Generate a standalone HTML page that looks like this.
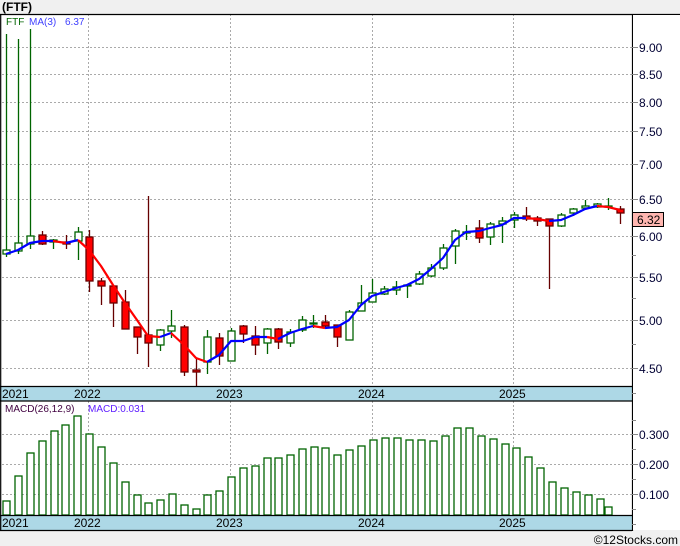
<!DOCTYPE html>
<html><head><meta charset="utf-8"><style>
html,body{margin:0;padding:0;background:#f0f0f0;}
svg{display:block;font-family:"Liberation Sans",sans-serif;}
</style></head><body>
<svg width="680" height="546" viewBox="0 0 680 546" xmlns="http://www.w3.org/2000/svg">
<rect x="0" y="0" width="680" height="546" fill="#f0f0f0"/>
<text x="2" y="11" font-size="12" font-weight="bold" fill="#000">(FTF)</text>
<!-- main panel -->
<rect x="0" y="14" width="632" height="372" fill="#fff"/>
<rect x="0" y="401" width="632" height="114" fill="#fff"/>
<g stroke="#aaa" stroke-width="1" stroke-dasharray="2,2" fill="none">
<path d="M2 47.5H632M2 74.5H632M2 102.5H632M2 131.5H632M2 164.5H632M2 199.5H632M2 236.5H632M2 277.5H632M2 320.5H632M2 368.5H632"/>
<path d="M88.5 14V386M230.5 14V386M372.5 14V386M513.5 14V386"/>
<path d="M2 434.5H632M2 464.5H632M2 494.5H632"/>
<path d="M88.5 401V515M230.5 401V515M372.5 401V515M513.5 401V515"/>
</g>
<text x="6" y="25" font-size="10" fill="#006400">FTF</text>
<text x="29" y="25" font-size="10" fill="#4040ff">MA(3)</text>
<text x="65" y="25" font-size="10" fill="#4040ff">6.37</text>
<!-- candles -->
<g stroke-width="1.3">
<g stroke="#006400" fill="#fff">
<path d="M6.5 34V257M18.5 39V254M30.5 29V249M53.5 239V249M78.5 227V260M160.5 329V351M171.5 310V338M207.5 330V374M231.5 328V361M267.5 328V354M290.5 329V347M302.5 316V332M313.5 315V328M349.5 310V340M361.5 285V311M372.5 279V302M384.5 286V295M396.5 281V295M407.5 285V298M419.5 271V285M431.5 264V277M443.5 244V270M455.5 229V264M466.5 225V240M490.5 222V245M502.5 217V243M514.5 212V228M561.5 213V227M573.5 208V216M585.5 200V210M597.5 203V208M608.5 198V210"/>
<rect x="3" y="250" width="7" height="4"/><rect x="15" y="243" width="7" height="8"/><rect x="27" y="236" width="7" height="8"/>
<rect x="50" y="240" width="7" height="2"/><rect x="75" y="232" width="7" height="9"/>
<rect x="157" y="330" width="7" height="15"/><rect x="168" y="326" width="7" height="5"/>
<rect x="204" y="337" width="7" height="25"/><rect x="228" y="331" width="7" height="30"/>
<rect x="264" y="329" width="7" height="14"/><rect x="287" y="332" width="7" height="11"/>
<rect x="299" y="320" width="7" height="10"/><rect x="310" y="323" width="7" height="1"/>
<rect x="346" y="312" width="7" height="28"/><rect x="358" y="303" width="7" height="8"/>
<rect x="369" y="293" width="7" height="9"/><rect x="381" y="289" width="7" height="5"/>
<rect x="393" y="287" width="7" height="3"/><rect x="404" y="285" width="7" height="1"/>
<rect x="416" y="274" width="7" height="10"/><rect x="428" y="268" width="7" height="8"/>
<rect x="440" y="248" width="7" height="20"/><rect x="452" y="231" width="7" height="15"/>
<rect x="463" y="232" width="7" height="1"/><rect x="487" y="224" width="7" height="13"/>
<rect x="499" y="221" width="7" height="3"/><rect x="511" y="215" width="7" height="5"/>
<rect x="558" y="215" width="7" height="11"/><rect x="570" y="209" width="7" height="4"/>
<rect x="582" y="206" width="7" height="2"/><rect x="594" y="204" width="7" height="3"/>
<rect x="605" y="206" width="7" height="1"/>
</g>
<g stroke="#600" fill="#f00">
<path d="M42.5 231V245M66.5 235V249M89.5 230V292M101.5 278V305M113.5 286V327M125.5 290V329M137.5 327V354M148.5 196V367M184.5 325V376M196.5 358V387M219.5 333V365M243.5 325V343M255.5 326V355M278.5 328V349M325.5 315V327M337.5 325V347M479.5 220V243M526.5 207V221M537.5 216V226M549.5 219V289M620.5 206V224"/>
<rect x="39" y="235" width="7" height="9"/><rect x="63" y="242" width="7" height="2"/>
<rect x="86" y="237" width="7" height="44"/><rect x="98" y="281" width="7" height="5"/>
<rect x="110" y="286" width="7" height="17"/><rect x="122" y="302" width="7" height="27"/>
<rect x="134" y="327" width="7" height="10"/><rect x="145" y="335" width="7" height="8"/>
<rect x="181" y="327" width="7" height="45"/><rect x="193" y="370" width="7" height="2"/>
<rect x="216" y="338" width="7" height="18"/><rect x="240" y="326" width="7" height="8"/>
<rect x="252" y="336" width="7" height="9"/><rect x="275" y="329" width="7" height="13"/>
<rect x="322" y="322" width="7" height="4"/><rect x="334" y="325" width="7" height="12"/>
<rect x="476" y="228" width="7" height="10"/><rect x="523" y="216" width="7" height="3"/>
<rect x="534" y="218" width="7" height="3"/><rect x="546" y="219" width="7" height="7"/>
<rect x="617" y="209" width="7" height="4"/>
</g>
</g>
<!-- MA line -->
<g fill="none" stroke-width="2.2" stroke-linejoin="round">
<polyline stroke="#0000ff" points="6,254 18,250 30,243 42,241 53,241"/>
<polyline stroke="#ff0000" points="53,241 66,243"/>
<polyline stroke="#0000ff" points="66,243 78,240"/>
<polyline stroke="#ff0000" points="78,240 89,250 101,266 113,285 125,303 137,320 148,336 160,337"/>
<polyline stroke="#0000ff" points="160,337 171,333"/>
<polyline stroke="#ff0000" points="171,333 184,345 196,358 207,362"/>
<polyline stroke="#0000ff" points="207,362 219,355 231,341 243,341 255,337 267,337"/>
<polyline stroke="#ff0000" points="267,337 278,339"/>
<polyline stroke="#0000ff" points="278,339 290,333 302,329 313,326"/>
<polyline stroke="#ff0000" points="313,326 325,328"/>
<polyline stroke="#0000ff" points="325,328 337,327 349,320 361,305 372,296 384,292 396,288 407,285 419,279 431,269 443,258 455,240 466,232 479,231 490,228 502,225 514,218 526,218"/>
<polyline stroke="#ff0000" points="526,218 537,219 549,221"/>
<polyline stroke="#0000ff" points="549,221 561,220 573,215 585,209 597,206"/>
<polyline stroke="#ff0000" points="597,206 608,207 620,210"/>
</g>
<!-- MACD bars -->
<g stroke="#006400" stroke-width="1.3" fill="#fff">
<rect x="3" y="501" width="7" height="14"/><rect x="15" y="476" width="7" height="39"/><rect x="27" y="453" width="7" height="62"/><rect x="39" y="441" width="7" height="74"/><rect x="51" y="431" width="7" height="84"/><rect x="62" y="425" width="7" height="90"/><rect x="74" y="416" width="7" height="99"/><rect x="86" y="434" width="7" height="81"/><rect x="98" y="447" width="7" height="68"/><rect x="110" y="463" width="7" height="52"/><rect x="122" y="482" width="7" height="33"/><rect x="134" y="495" width="7" height="20"/><rect x="145" y="503" width="7" height="12"/><rect x="157" y="500" width="7" height="15"/><rect x="169" y="494" width="7" height="21"/><rect x="181" y="505" width="7" height="10"/><rect x="193" y="509" width="7" height="6"/><rect x="204" y="495" width="7" height="20"/><rect x="216" y="491" width="7" height="24"/><rect x="228" y="477" width="7" height="38"/><rect x="240" y="468" width="7" height="47"/><rect x="252" y="466" width="7" height="49"/><rect x="264" y="458" width="7" height="57"/><rect x="275" y="458" width="7" height="57"/><rect x="287" y="455" width="7" height="60"/><rect x="299" y="449" width="7" height="66"/><rect x="311" y="447" width="7" height="68"/><rect x="322" y="448" width="7" height="67"/><rect x="334" y="455" width="7" height="60"/><rect x="346" y="450" width="7" height="65"/><rect x="358" y="446" width="7" height="69"/><rect x="370" y="440" width="7" height="75"/><rect x="382" y="438" width="7" height="77"/><rect x="394" y="438" width="7" height="77"/><rect x="406" y="440" width="7" height="75"/><rect x="418" y="440" width="7" height="75"/><rect x="430" y="441" width="7" height="74"/><rect x="442" y="436" width="7" height="79"/><rect x="454" y="428" width="7" height="87"/><rect x="466" y="428" width="7" height="87"/><rect x="478" y="436" width="7" height="79"/><rect x="490" y="439" width="7" height="76"/><rect x="502" y="444" width="7" height="71"/><rect x="513" y="448" width="7" height="67"/><rect x="525" y="457" width="7" height="58"/><rect x="537" y="468" width="7" height="47"/><rect x="549" y="482" width="7" height="33"/><rect x="561" y="488" width="7" height="27"/><rect x="573" y="492" width="7" height="23"/><rect x="585" y="495" width="7" height="20"/><rect x="597" y="499" width="7" height="16"/><rect x="605" y="507" width="7" height="8"/>
</g>
<text x="5" y="412" font-size="10" fill="#400040">MACD(26,12,9)</text>
<text x="88" y="412" font-size="10" fill="#6020ff">MACD:0.031</text>
<!-- date strips -->
<rect x="0" y="387" width="632" height="14" fill="#add8e6"/>
<rect x="0" y="516" width="632" height="14" fill="#add8e6"/>
<g stroke="#000" stroke-width="1.2" fill="none">
<path d="M0 14.5H680M0 386.5H632M0 401H680M0 515.5H632M0 530.5H632M632.5 14V531M0.7 14V531"/>
</g>
<g font-size="12" fill="#000">
<text x="2" y="398">2021</text><text x="74" y="398">2022</text><text x="216" y="398">2023</text><text x="358" y="398">2024</text><text x="499" y="398">2025</text>
<text x="2" y="527">2021</text><text x="74" y="527">2022</text><text x="216" y="527">2023</text><text x="358" y="527">2024</text><text x="499" y="527">2025</text>
</g>
<!-- right axis -->
<rect x="633" y="15" width="47" height="515" fill="#fff"/>
<g stroke="#888" stroke-width="1">
<path d="M632 47.5h6M632 74.5h6M632 102.5h6M632 131.5h6M632 164.5h6M632 199.5h6M632 236.5h6M632 277.5h6M632 320.5h6M632 368.5h6M632 255.5h4M632 298.5h4M632 344.5h4M632 393.5h4"/>
<path d="M632 420.5h4M632 434.5h6M632 449.5h4M632 464.5h6M632 479.5h4M632 494.5h6M632 509.5h4M632 524.5h4"/>
</g>
<g font-size="12" fill="#000033">
<text x="639" y="52">9.00</text><text x="639" y="79">8.50</text><text x="639" y="107">8.00</text><text x="639" y="136">7.50</text><text x="639" y="169">7.00</text><text x="639" y="204">6.50</text><text x="639" y="241">6.00</text><text x="639" y="282">5.50</text><text x="639" y="325">5.00</text><text x="639" y="373">4.50</text>
<text x="639" y="439">0.300</text><text x="639" y="469">0.200</text><text x="639" y="499">0.100</text>
</g>
<rect x="632.5" y="212.5" width="31" height="14" fill="#ffb6b0" stroke="#000" stroke-width="1"/>
<text x="637" y="224" font-size="12" fill="#000">6.32</text>
<text x="678" y="544" font-size="12" fill="#000" text-anchor="end">©12Stocks.com</text>
</svg>
</body></html>
